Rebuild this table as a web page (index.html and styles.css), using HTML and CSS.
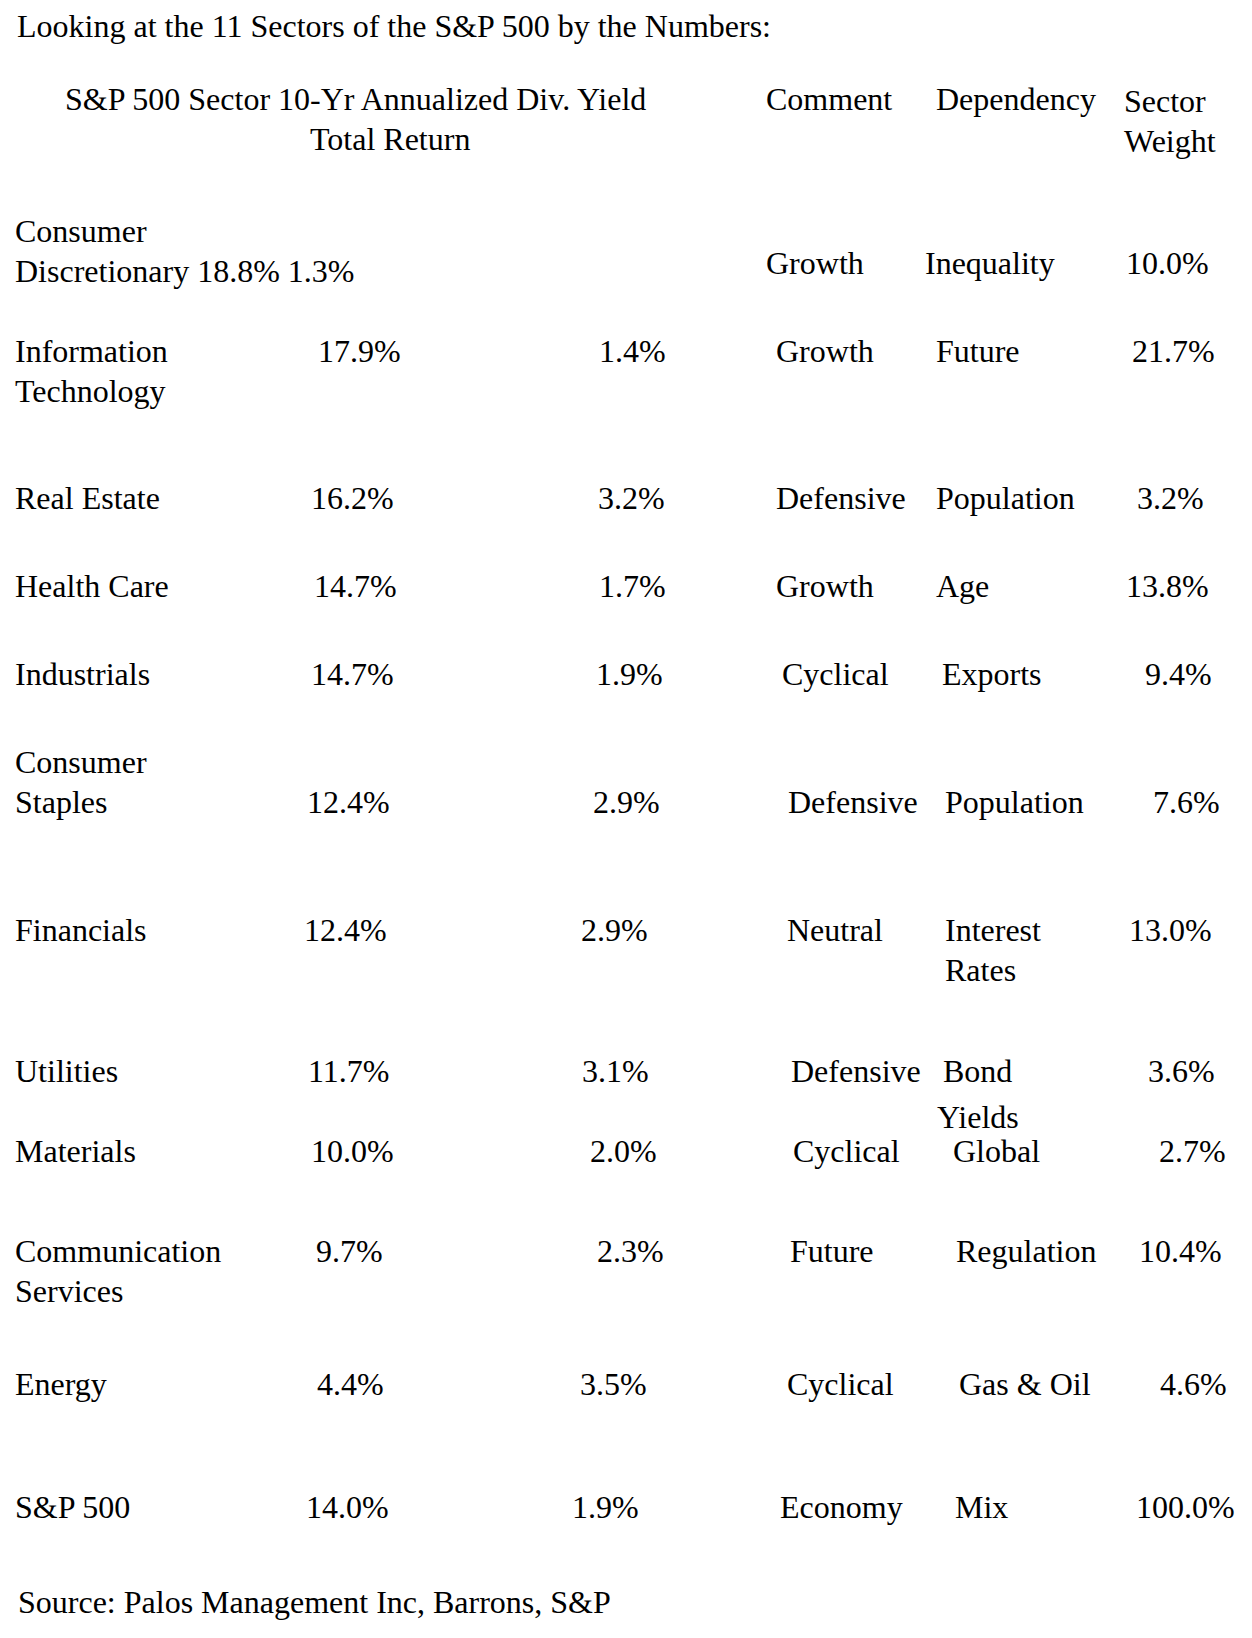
FILE: index.html
```html
<!DOCTYPE html>
<html lang="en">
<head>
<meta charset="utf-8">
<title>S&amp;P 500 Sectors by the Numbers</title>
<link rel="stylesheet" href="styles.css">
</head>
<body>
<div class="page">
  <p class="title">Looking at the 11 Sectors of the S&amp;P 500 by the Numbers:</p>

  <div class="row hdr">
    <div>S&amp;P 500 Sector 10-Yr Annualized Div. Yield<span class="tr">Total Return</span></div>
    <div>Comment</div>
    <div>Dependency</div>
    <div class="sw">Sector<br>Weight</div>
  </div>

  <div class="row r-cd">
    <div>Consumer<br>Discretionary 18.8% 1.3%</div>
    <div class="lift">Growth</div>
    <div class="lift">Inequality</div>
    <div class="lift">10.0%</div>
  </div>

  <div class="row r-it">
    <div>Information<br>Technology</div>
    <div>17.9%</div>
    <div>1.4%</div>
    <div>Growth</div>
    <div>Future</div>
    <div>21.7%</div>
  </div>

  <div class="row r-re">
    <div>Real Estate</div>
    <div>16.2%</div>
    <div>3.2%</div>
    <div>Defensive</div>
    <div>Population</div>
    <div>3.2%</div>
  </div>

  <div class="row r-hc">
    <div>Health Care</div>
    <div>14.7%</div>
    <div>1.7%</div>
    <div>Growth</div>
    <div>Age</div>
    <div>13.8%</div>
  </div>

  <div class="row r-in">
    <div>Industrials</div>
    <div>14.7%</div>
    <div>1.9%</div>
    <div>Cyclical</div>
    <div>Exports</div>
    <div>9.4%</div>
  </div>

  <div class="row r-cs">
    <div>Consumer<br>Staples</div>
    <div>12.4%</div>
    <div>2.9%</div>
    <div>Defensive</div>
    <div>Population</div>
    <div>7.6%</div>
  </div>

  <div class="row r-fi">
    <div>Financials</div>
    <div>12.4%</div>
    <div>2.9%</div>
    <div>Neutral</div>
    <div>Interest<br>Rates</div>
    <div>13.0%</div>
  </div>

  <div class="row r-ut">
    <div>Utilities</div>
    <div>11.7%</div>
    <div>3.1%</div>
    <div>Defensive</div>
    <div>Bond<span class="yields">Yields</span></div>
    <div>3.6%</div>
  </div>

  <div class="row r-ma">
    <div>Materials</div>
    <div>10.0%</div>
    <div>2.0%</div>
    <div>Cyclical</div>
    <div>Global</div>
    <div>2.7%</div>
  </div>

  <div class="row r-co">
    <div>Communication<br>Services</div>
    <div>9.7%</div>
    <div>2.3%</div>
    <div>Future</div>
    <div>Regulation</div>
    <div>10.4%</div>
  </div>

  <div class="row r-en">
    <div>Energy</div>
    <div>4.4%</div>
    <div>3.5%</div>
    <div>Cyclical</div>
    <div>Gas &amp; Oil</div>
    <div>4.6%</div>
  </div>

  <div class="row r-sp">
    <div>S&amp;P 500</div>
    <div>14.0%</div>
    <div>1.9%</div>
    <div>Economy</div>
    <div>Mix</div>
    <div>100.0%</div>
  </div>

  <p class="source">Source: Palos Management Inc, Barrons, S&amp;P</p>
</div>
</body>
</html>
```

FILE: styles.css
```css
html, body {
  margin: 0;
  padding: 0;
  background: #ffffff;
}

body {
  color: #000000;
  font-family: "Liberation Serif", "Times New Roman", serif;
  font-size: 32px;
  line-height: 40px;
}

.page {
  padding: 6px 0 0 15px;
}

.title {
  margin: 0 0 0 2px;
}

.source {
  margin: 55px 0 0 3px;
}

.row {
  display: grid;
  white-space: nowrap;
}

/* header */
.hdr {
  margin-top: 33px;
  padding-left: 50px;
  grid-template-columns: 701px 170px 188px auto;
}
.hdr .tr {
  display: block;
  margin-left: 245px;
}
.hdr .sw {
  padding-top: 2px;
}

/* consumer discretionary */
.r-cd {
  margin-top: 50px;
  grid-template-columns: 751px 159px 201px auto;
  align-items: end;
}
.r-cd .lift {
  margin-bottom: 8px;
}

.r-it {
  margin-top: 40px;
  grid-template-columns: 303px 281px 177px 160px 196px auto;
}

.r-re {
  margin-top: 67px;
  grid-template-columns: 296px 287px 178px 160px 201px auto;
}

.r-hc {
  margin-top: 48px;
  grid-template-columns: 299px 285px 177px 160px 190px auto;
}

.r-in {
  margin-top: 48px;
  grid-template-columns: 296px 285px 186px 160px 203px auto;
}

.r-cs {
  margin-top: 48px;
  grid-template-columns: 292px 286px 195px 157px 208px auto;
  align-items: end;
}

.r-fi {
  margin-top: 88px;
  grid-template-columns: 289px 277px 206px 158px 184px auto;
  align-items: start;
}

.r-ut {
  margin-top: 61px;
  grid-template-columns: 293px 274px 209px 152px 205px auto;
  align-items: start;
}
.r-ut .yields {
  display: block;
  margin: 6px 0 0 -6px;
}

.r-ma {
  margin-top: -6px;
  grid-template-columns: 296px 279px 203px 160px 206px auto;
}

.r-co {
  margin-top: 60px;
  grid-template-columns: 301px 281px 193px 166px 183px auto;
  align-items: start;
}

.r-en {
  margin-top: 53px;
  grid-template-columns: 302px 263px 207px 172px 201px auto;
}

.r-sp {
  margin-top: 83px;
  grid-template-columns: 291px 266px 208px 175px 181px auto;
}
```
